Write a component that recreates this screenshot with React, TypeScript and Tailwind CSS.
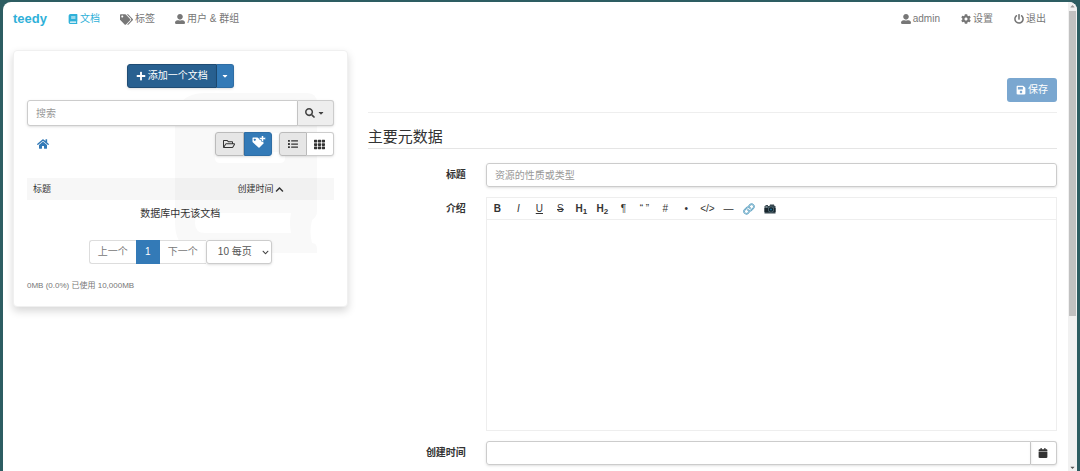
import React, { useState } from 'react';
import {
  FaBook,
  FaCalendar,
  FaCaretDown,
  FaChevronDown,
  FaChevronUp,
  FaCog,
  FaHome,
  FaList,
  FaPlus,
  FaPowerOff,
  FaRegFolderOpen,
  FaSave,
  FaSearch,
  FaTags,
  FaTh,
  FaUserAlt,
} from 'react-icons/fa';

interface NavItem {
  label: string;
  icon: React.ReactNode;
  active?: boolean;
}

interface Tool {
  title: string;
  content: React.ReactNode;
}

const mainNav: NavItem[] = [
  { label: '文档', icon: <FaBook />, active: true },
  { label: '标签', icon: <FaTags className="text-[13px]" /> },
  { label: '用户 & 群组', icon: <FaUserAlt /> },
];

const userNav: NavItem[] = [
  { label: 'admin', icon: <FaUserAlt /> },
  { label: '设置', icon: <FaCog /> },
  { label: '退出', icon: <FaPowerOff /> },
];

const TagPlusIcon = () => (
  <svg viewBox="0 0 28 24" className="h-3 w-[14px]" fill="currentColor">
    <path
      fillRule="evenodd"
      d="M2 3h9l12 10q1 1 0 2l-8 8q-1 1-2 0L1 12V4q0-1 1-1zm3.500 2.500a2 2 0 1 0 .1 0z"
    />
    <path d="M19 -1h4v4h4v4h-4v4h-4V7h-4V3h4z" stroke="#337ab7" strokeWidth="1" />
  </svg>
);

const LinkIcon = () => (
  <svg viewBox="0 0 24 24" className="size-3" fill="none" strokeLinecap="round">
    <g stroke="#5b9fc0" strokeWidth="3.4">
      <path d="M10 14a4.5 4.5 0 0 0 6.6.4l4-4a4.6 4.6 0 0 0-6.5-6.5L12 6" />
      <path d="M14 10a4.5 4.5 0 0 0-6.600-.4l-4 4a4.6 4.6 0 0 0 6.500 6.500L12 18" />
    </g>
    <g stroke="#d3eaf3" strokeWidth="1">
      <path d="M10 14a4.5 4.5 0 0 0 6.6.4l4-4a4.6 4.6 0 0 0-6.5-6.5L12 6" />
      <path d="M14 10a4.5 4.5 0 0 0-6.600-.4l-4 4a4.6 4.6 0 0 0 6.500 6.500L12 18" />
    </g>
  </svg>
);

const CameraIcon = () => (
  <svg viewBox="0 0 24 20" className="h-[10px] w-3">
    <path d="M1 4h2V2h5v2h3l1-3h8l1 3h2v15H1z" fill="#37474f" />
    <path d="M1 8h22v8H1z" fill="#17252c" />
    <circle cx="14" cy="11" r="6" fill="#546e7a" />
    <circle cx="14" cy="11" r="4.4" fill="#102027" />
    <circle cx="14" cy="11" r="2" fill="#1e6f9c" />
    <path d="M3 5h4v2H3z" fill="#b0bec5" />
  </svg>
);

const tools: Tool[] = [
  { title: 'Bold', content: <b>B</b> },
  { title: 'Italic', content: <i>I</i> },
  { title: 'Underline', content: <u>U</u> },
  { title: 'Strike-through', content: <s>S</s> },
  { title: 'Heading 1', content: <b>H<sub>1</sub></b> },
  { title: 'Heading 2', content: <b>H<sub>2</sub></b> },
  { title: 'Paragraph', content: '¶' },
  { title: 'Quote', content: '“ ”' },
  { title: 'Ordered list', content: '#' },
  { title: 'Unordered list', content: '•' },
  { title: 'Code', content: '</>' },
  { title: 'Horizontal line', content: '―' },
  { title: 'Link', content: <LinkIcon /> },
  { title: 'Image', content: <CameraIcon /> },
];

const NavLink: React.FC<{ item: NavItem }> = ({ item }) => (
  <a
    href="#"
    className={`flex items-center gap-[2px] ${item.active ? 'text-[#2fb1d9]' : 'text-[#777]'}`}
  >
    {item.icon}
    <span>{item.label}</span>
  </a>
);

const Sidebar: React.FC = () => {
  const [search, setSearch] = useState('');
  const [pageSize, setPageSize] = useState('10');

  return (
    <section className="relative isolate rounded-sm border border-[#f0f0f0] bg-white px-[13px] pt-[13px] pb-[14px] shadow-[0_4px_8px_rgba(0,0,0,0.16)]">
      {/* Faded book behind the list */}
      <svg
        viewBox="0 0 142 160"
        className="absolute top-[42px] right-[30px] -z-10 h-[160px] w-[142px]"
        fill="#f9f9f9"
        aria-hidden="true"
      >
        <path
          fillRule="evenodd"
          d="M30 0h102q10 0 10 10v108q0 6-5 9q-3 12 0 23q5 0 5 6v4H30Q0 160 0 130V30Q0 0 30 0zM45 40q-5 0-5 4v3h70v-7zM40 59v6q0 5 5 5h60q5 0 5-5v-6zM30 120q-10 0-10 10t10 10h86q-2-10 0-20z"
        />
      </svg>

      <div className="flex justify-center">
        <button className="flex h-6 items-center gap-[2px] rounded-l-[3px] border border-[#1f4c74] bg-[#286090] px-2 text-white shadow-sm">
          <FaPlus />
          <span>添加一个文档</span>
        </button>
        <button
          aria-label="更多"
          className="flex h-6 w-[17px] items-center justify-center rounded-r-[3px] border border-l-0 border-[#2e6da4] bg-[#337ab7] text-white shadow-sm"
        >
          <FaCaretDown className="size-2" />
        </button>
      </div>

      <div className="mt-3 flex">
        <input
          type="text"
          aria-label="搜索"
          placeholder="搜索"
          className="h-[26px] min-w-0 flex-1 rounded-l-[3px] border border-[#ccc] bg-white px-2 shadow-sm placeholder:text-[#999]"
          value={search}
          onChange={(e) => setSearch(e.target.value)}
        />
        <button
          aria-label="高级搜索"
          className="flex h-[26px] w-9 items-center justify-center gap-[2px] rounded-r-[3px] border border-l-0 border-[#ccc] bg-[#eee] text-[#444] shadow-sm"
        >
          <FaSearch />
          <FaCaretDown className="size-2" />
        </button>
      </div>

      <div className="mt-[6px] flex items-center">
        <a href="#" aria-label="主页" className="ml-[10px] text-xs text-[#337ab7]">
          <FaHome />
        </a>
        <div className="ml-auto flex rounded-[3px] shadow-sm">
          <button
            aria-label="文件夹"
            className="flex h-6 w-[29px] items-center justify-center rounded-l-[3px] border border-[#bbb] bg-[#e6e6e6] text-xs"
          >
            <FaRegFolderOpen />
          </button>
          <button
            aria-label="添加标签"
            className="flex h-6 w-7 items-center justify-center rounded-r-[3px] border border-[#2e6da4] bg-[#337ab7] pb-1 pl-[2px] text-white"
          >
            <TagPlusIcon />
          </button>
        </div>
        <div className="ml-[7px] flex rounded-[3px] shadow-sm">
          <button
            aria-label="列表"
            className="flex h-6 w-7 items-center justify-center rounded-l-[3px] border border-[#bbb] bg-[#e6e6e6]"
          >
            <FaList />
          </button>
          <button
            aria-label="网格"
            className="flex h-6 w-[27px] items-center justify-center rounded-r-[3px] border border-l-0 border-[#ccc] bg-white"
          >
            <FaTh className="text-[11px]" />
          </button>
        </div>
      </div>

      <table className="mt-[22px] w-full table-fixed">
        <thead>
          <tr className="h-[22px] bg-black/3 text-[9px]">
            <th className="w-2/3 px-[6px] text-left font-normal">标题</th>
            <th className="px-[6px] text-left font-normal">
              <button className="flex items-center gap-[2px]">
                创建时间 <FaChevronUp />
              </button>
            </th>
          </tr>
        </thead>
        <tbody>
          <tr className="h-7">
            <td colSpan={2} className="text-center">
              数据库中无该文档
            </td>
          </tr>
        </tbody>
      </table>

      <div className="mt-3 flex justify-center">
        <nav className="flex text-[#777]">
          <button className="h-6 rounded-l-[3px] border border-r-0 border-[#ddd] bg-white px-2">上一个</button>
          <button className="h-6 w-6 bg-[#337ab7] text-white">1</button>
          <button className="h-6 border border-x-0 border-[#ddd] bg-white px-2">下一个</button>
        </nav>
        <div className="relative">
          <select
            aria-label="每页数量"
            className="h-6 w-[66px] appearance-none rounded-[3px] border border-[#ccc] bg-white pl-[11px] text-[#555] shadow-sm"
            value={pageSize}
            onChange={(e) => setPageSize(e.target.value)}
          >
            <option value="10">10 每页</option>
            <option value="20">20 每页</option>
            <option value="50">50 每页</option>
          </select>
          <FaChevronDown className="pointer-events-none absolute top-[9px] right-[3px] size-[7px] text-[#444]" />
        </div>
      </div>

      <p className="mt-4 text-[8px] leading-3 text-[#777]">0MB (0.0%) 已使用 10,000MB</p>
    </section>
  );
};

const DocumentForm: React.FC = () => {
  const [title, setTitle] = useState('');
  const [date, setDate] = useState('');

  return (
    <form onSubmit={(e) => e.preventDefault()}>
      <div className="flex justify-end border-b border-[#eee] pt-7 pb-[10px]">
        <button className="flex h-6 items-center gap-[2px] rounded-[3px] bg-[#7aa7d0] px-[9px] text-white">
          <FaSave />
          <span>保存</span>
        </button>
      </div>

      <h2 className="mt-[14px] border-b border-[#e5e5e5] pb-px text-[15px] leading-5">主要元数据</h2>

      <div className="-mx-[10px] mt-[14px] flex flex-col gap-[10px]">
        <div className="flex">
          <label htmlFor="title" className="w-1/6 px-[10px] pt-1 text-right font-bold">
            标题
          </label>
          <div className="flex-1 px-[10px]">
            <input
              id="title"
              type="text"
              placeholder="资源的性质或类型"
              className="block h-6 w-full rounded-[3px] border border-[#ccc] px-2 shadow-sm placeholder:text-[#999]"
              value={title}
              onChange={(e) => setTitle(e.target.value)}
            />
          </div>
        </div>

        <div className="flex">
          <label htmlFor="description" className="w-1/6 px-[10px] pt-1 text-right font-bold">
            介绍
          </label>
          <div className="flex-1 px-[10px]">
            <div className="border border-[#eee]">
              <div className="flex h-[22px] border-b border-[#eee]">
                {tools.map((tool) => (
                  <button
                    key={tool.title}
                    type="button"
                    title={tool.title}
                    className="flex w-[21px] items-center justify-center whitespace-nowrap [&_sub]:text-[8px]"
                  >
                    <span>{tool.content}</span>
                  </button>
                ))}
              </div>
              <textarea id="description" className="block h-[210px] w-full resize-none p-2" />
            </div>
          </div>
        </div>

        <div className="flex">
          <label htmlFor="date" className="w-1/6 px-[10px] pt-1 text-right font-bold">
            创建时间
          </label>
          <div className="flex flex-1 px-[10px]">
            <input
              id="date"
              type="text"
              className="h-6 min-w-0 flex-1 rounded-l-[3px] border border-[#ccc] px-2 shadow-sm"
              value={date}
              onChange={(e) => setDate(e.target.value)}
            />
            <button
              type="button"
              aria-label="选择日期"
              className="flex h-6 w-[26px] items-center justify-center rounded-r-[3px] border border-l-0 border-[#ccc] shadow-sm"
            >
              <FaCalendar />
            </button>
          </div>
        </div>
      </div>
    </form>
  );
};

const App: React.FC = () => {
  return (
    <div className="h-screen bg-[#2d5d62] px-[3px] pt-[2px] font-['Liberation_Sans','Noto_Sans_CJK_SC',sans-serif] text-[10px] leading-4 text-[#333]">
      <div className="flex h-full overflow-hidden rounded-t-lg bg-white">
        <div className="min-w-0 flex-1 overflow-hidden">
          <header className="flex h-[34px] items-center gap-[21px] pr-[22px] pl-[10px]">
            <a href="#" className="text-[13px] font-bold text-[#2fb1d9]">
              teedy
            </a>
            <nav className="flex gap-5">
              {mainNav.map((item) => (
                <NavLink key={item.label} item={item} />
              ))}
            </nav>
            <nav className="ml-auto flex gap-[21px]">
              {userNav.map((item) => (
                <NavLink key={item.label} item={item} />
              ))}
            </nav>
          </header>

          <main className="flex items-start pt-[14px] pr-px">
            <div className="w-1/3 px-[10px]">
              <Sidebar />
            </div>
            <div className="w-2/3 px-[10px]">
              <DocumentForm />
            </div>
          </main>
        </div>

        <div aria-hidden="true" className="flex w-[9px] flex-col bg-[#f1f1f1] px-px">
          <div className="flex h-[9px] items-center justify-center">
            <FaCaretDown className="size-[7px] rotate-180 text-[#999]" />
          </div>
          <div className="h-[65%] bg-[#c1c1c1]" />
          <FaCaretDown className="mt-auto size-[7px] text-[#555]" />
        </div>
      </div>
    </div>
  );
};

export default App;
